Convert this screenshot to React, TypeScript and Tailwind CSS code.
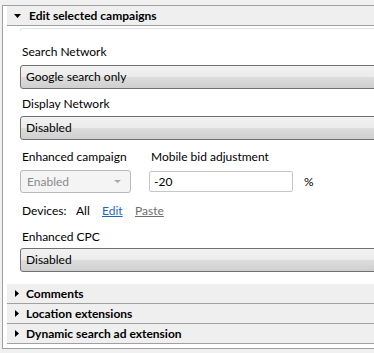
import React from 'react';

const FONT = { fontFamily: 'Lato, "Noto Sans", sans-serif' };

function ButtonSelect({ value }: { value: string }) {
  return (
    <div className="w-[380px] h-[24px] border border-[#707070] rounded-[3px] bg-[linear-gradient(#f2f2f2_0%,#ebebeb_50%,#dddddd_50%,#cfcfcf_100%)] flex items-center pl-[5px] text-[12px] text-black">
      {value}
    </div>
  );
}

function Label({ children, className = '' }: { children: React.ReactNode; className?: string }) {
  return <div className={`h-[16px] leading-[16px] text-[12px] text-black pl-[2px] ${className}`}>{children}</div>;
}

function CollapsedRow({ title }: { title: string }) {
  return (
    <div className="h-[20px] bg-[#efefef] border-b border-[#a0a0a0] flex items-center pl-[8px] gap-[7px]">
      <svg width="4" height="7" viewBox="0 0 4 7">
        <polygon points="0,0 4,3.5 0,7" fill="#000" />
      </svg>
      <span className="text-[12px] font-bold text-black">{title}</span>
    </div>
  );
}

export default function App() {
  return (
    <div className="w-[374px] h-[353px] bg-[#f0f0f0] overflow-hidden pt-[5px] pl-[2px]" style={FONT}>
      <div className="w-[420px] bg-white border-l border-t border-b border-[#a0a0a0] pl-[4px] pb-[4px]">
        {/* expanded section header */}
        <div className="h-[20px] bg-[#efefef] border-b border-[#a0a0a0] flex items-center pl-[7px] gap-[8px]">
          <svg width="7" height="4" viewBox="0 0 7 4">
            <polygon points="0,0 7,0 3.5,4" fill="#000" />
          </svg>
          <span className="text-[12px] font-bold text-black">Edit selected campaigns</span>
        </div>

        <div className="ml-[13px] mt-[2px]">
          <div className="h-[3px] border-t border-l border-[#dfe4ea] rounded-tl-[2px]" />
          <Label className="mt-[13px]">Search Network</Label>
          <div className="mt-[5px]">
            <ButtonSelect value="Google search only" />
          </div>
          <Label className="mt-[7px]">Display Network</Label>
          <div className="mt-[4px]">
            <ButtonSelect value="Disabled" />
          </div>

          <div className="flex mt-[9px]">
            <div className="w-[129px]">
              <Label>Enhanced campaign</Label>
              <div className="mt-[5px] w-[111px] h-[23px] border border-[#b9b9b9] rounded-[3px] bg-[#f4f4f4] flex items-center justify-between pl-[6px] pr-[9px] text-[12px] text-[#8a8a8a]">
                <span>Enabled</span>
                <svg width="7" height="3" viewBox="0 0 7 3">
                  <polygon points="0,0 7,0 3.5,3" fill="#a6a6a6" />
                </svg>
              </div>
            </div>
            <div>
              <Label>Mobile bid adjustment</Label>
              <div className="flex items-center mt-[6px]">
                <div className="w-[144px] h-[21px] border border-[#c5c7cc] rounded-[2px] bg-white flex items-center pl-[4px] text-[12px] text-black">
                  -20
                </div>
                <span className="ml-[11px] text-[12px] text-black">%</span>
              </div>
            </div>
          </div>

          <div className="mt-[10px] h-[16px] leading-[16px] text-[12px] pl-[2px] flex">
            <span className="w-[54px] text-black">Devices:</span>
            <span className="w-[26px] text-black">All</span>
            <span className="w-[33px] text-[#1a66c2] underline">Edit</span>
            <span className="text-[#6e6e6e] underline">Paste</span>
          </div>

          <Label className="mt-[10px]">Enhanced CPC</Label>
          <div className="mt-[3px]">
            <ButtonSelect value="Disabled" />
          </div>
        </div>

        <div className="mt-[12px]">
          <CollapsedRow title="Comments" />
          <CollapsedRow title="Location extensions" />
          <CollapsedRow title="Dynamic search ad extension" />
        </div>
      </div>
    </div>
  );
}
